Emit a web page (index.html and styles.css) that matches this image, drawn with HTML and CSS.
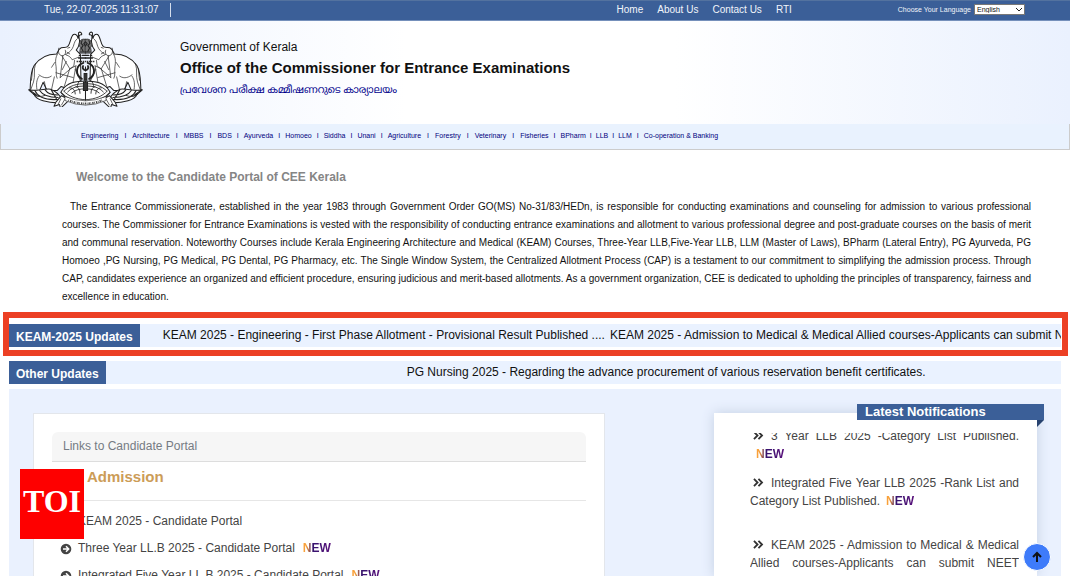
FILE: index.html
```html
<!DOCTYPE html>
<html lang="en">
<head>
<meta charset="utf-8">
<title>CEE Kerala</title>
<link rel="stylesheet" href="styles.css">
</head>
<body>
<div class="topbar">
  <time class="clock">Tue, 22-07-2025 11:31:07</time>
  <nav class="toplinks">
    <a href="#">Home</a><a href="#">About Us</a><a href="#">Contact Us</a><a href="#">RTI</a>
  </nav>
  <div class="language">
    <label for="lang">Choose Your Language</label>
    <span class="picker">
      <select id="lang"><option>English</option></select>
      <svg viewBox="0 0 8 6" width="8" height="6"><path d="M1 1l3 3 3-3" fill="none" stroke="#222"/></svg>
    </span>
  </div>
</div>

<header class="masthead">
  <svg class="emblem" viewBox="28 18 336 222" role="img" aria-label="Emblem of Kerala">
    <defs>
      <g id="half" fill="none" stroke="#222" stroke-width="3" stroke-linejoin="round" stroke-linecap="round">
        <path fill="#fff" d="M174 40c-1-9-6-14-13-12-9 6-8 24-16 34-5 7-12 3-20 5-8 3-10 12-13 18-26 0-50 10-66 34-12 20-10 42-12 73h28l10-24 12 24h29l12-12 22 8 36-18-2-84-12-12c8-10 12-22 8-38 0-5 2-8 8-7 1-6-5-10-9-6z"/>
        <path d="M170 42c-8 6-7 19-13 28-5 7-12 14-20 17M118 68c-3 10 0 22 10 22 8 0 12-8 9-16M144 68l6-2M142 80l8 5M140 88c8 2 14 8 17 14l20-8M115 84c-8 12-7 26-5 38 2 16-2 24 3 34M130 90l-8 64M122 154l40-34 2-16M105 152l-8 36M128 92l22 36 18-8M150 128l-16 52M168 120l-10 58M110 140l50 14M50 113c-7 20 0 36-6 54l-7 20M60 150c-8 12-8 24-6 38M96 150c-14 10-28 2-36-4M76 166l4 22M42 128l-4 34M106 110l-9 14M140 107l-12 24M166 130l16 35" stroke-width="2"/>
        <path fill="#fff" d="M30 190c22 4 44-4 64-2 12 4 24 14 34 30l-12 10c-30 0-64-8-70-24-4-6-10-8-16-14z"/>
        <path d="M48 192c10 22 40 28 68 26M62 192c10 16 32 20 54 20M78 190c8 12 20 15 36 15M44 202c10 8 24 8 34 4M32 190l20 14M96 190l16 28"/>
        <path fill="#fff" d="M126 207l-16 18-6 13 16-5 3 11 26-25z"/>
        <path d="M124 216l-8 17M136 217l-10 17" stroke-width="2"/>
        <path fill="#fff" d="M196 165c-32-2-60 8-72 32 14 16 38 28 72 30z"/>
        <path d="M133 194c16-16 38-23 63-22M144 196c12-13 28-18 52-17M156 199c10-9 22-12 40-12M133 194c14 15 34 23 63 25M168 180c8 2 12 9 12 20M150 184c10 0 16 8 16 18M124 198c14 20 38 32 72 35M180 163c-6 6-8 12-8 18" stroke-width="2.5"/>
        <path d="M190 111c-23 7-25 35-4 47M193 132c-5-3-6-8-4-12" stroke-width="5"/>
        <path d="M182 112c-17 13-16 34-2 45" stroke-width="2"/>
        <path fill="#777" d="M196 42c-10-2-16 2-17 9-3 5-2 11 2 15l-2 12h17z" stroke-width="2"/>
        <path d="M186 46l-3 8 6 6-5 8 5 9M196 50l-5 5 5 7"/>
        <path d="M179 82h17M178 89h4M187 89h9M176 97h20" stroke-width="4"/>
      </g>
    </defs>
    <use href="#half"/>
    <use href="#half" transform="translate(392 0) scale(-1 1)"/>
    <path d="M196 122v14M192 142h8v20h-8zM190 168h12v24h-12z" fill="#333" stroke="#222" stroke-width="3"/>
    <path d="M170 107h52" stroke="#333" stroke-width="4" stroke-dasharray="4 2"/>
    <path d="M136 209q60 26 120 0v12q-60 27-120 0z" fill="#fff" stroke="#333" stroke-width="2"/>
    <path d="M146 220q50 20 100 0" fill="none" stroke="#444" stroke-width="6" stroke-dasharray="2 3 4 2"/>
  </svg>
  <div class="titles">
    <p class="govt">Government of Kerala</p>
    <h1>Office of the Commissioner for Entrance Examinations</h1>
    <p class="malayalam" lang="ml">പ്രവേശന പരീക്ഷ കമ്മീഷണറുടെ കാര്യാലയം</p>
  </div>
</header>

<nav class="courses">
  <a href="#">Engineering</a><i class="wide">I</i><a href="#">Architecture</a><i class="wide">I</i><a href="#">MBBS</a><i class="wide">I</i><a href="#">BDS</a><i>I</i><a href="#">Ayurveda</a><i>I</i><a href="#">Homoeo</a><i>I</i><a href="#">Siddha</a><i>I</i><a href="#">Unani</a><i>I</i><a href="#">Agriculture</a><i class="wide">I</i><a href="#">Forestry</a><i class="wide">I</i><a href="#">Veterinary</a><i class="wide">I</i><a href="#">Fisheries</a><i>I</i><a href="#">BPharm</a><i class="tight">I</i><a href="#">LLB</a><i class="tight">I</i><a href="#">LLM</a><i>I</i><a href="#">Co-operation &amp; Banking</a>
</nav>

<section class="welcome">
  <h2>Welcome to the Candidate Portal of CEE Kerala</h2>
  <p>
    <span>The Entrance Commissionerate, established in the year 1983 through Government Order GO(MS) No-31/83/HEDn, is responsible for conducting examinations and counseling for admission to various professional</span>
    <span>courses. The Commissioner for Entrance Examinations is vested with the responsibility of conducting entrance examinations and allotment to various professional degree and post-graduate courses on the basis of merit</span>
    <span>and communal reservation. Noteworthy Courses include Kerala Engineering Architecture and Medical (KEAM) Courses, Three-Year LLB,Five-Year LLB, LLM (Master of Laws), BPharm (Lateral Entry), PG Ayurveda, PG</span>
    <span>Homoeo ,PG Nursing, PG Medical, PG Dental, PG Pharmacy, etc. The Single Window System, the Centralized Allotment Process (CAP) is a testament to our commitment to simplifying the admission process. Through</span>
    <span>CAP, candidates experience an organized and efficient procedure, ensuring judicious and merit-based allotments. As a government organization, CEE is dedicated to upholding the principles of transparency, fairness and</span>
    <span>excellence in education.</span>
  </p>
</section>

<section class="highlight">
  <div class="ticker">
    <h3>KEAM-2025 Updates</h3>
    <p class="keam"><span>KEAM 2025 - Engineering - First Phase Allotment - Provisional Result Published ....</span><span>KEAM 2025 - Admission to Medical &amp; Medical Allied courses-Applicants can submit N</span></p>
  </div>
</section>
<section class="ticker other">
  <h3>Other Updates</h3>
  <p>PG Nursing 2025 - Regarding the advance procurement of various reservation benefit certificates.</p>
</section>

<main class="panel">
  <section class="portal">
    <h2>Links to Candidate Portal</h2>
    <h3>Admission</h3>
    <ul>
      <li><svg class="arrow" viewBox="0 0 12 12"><circle cx="6" cy="6" r="5.3"/><path d="M3 6h5.5M6 3.3L8.7 6 6 8.7"/></svg><a href="#">KEAM 2025 - Candidate Portal</a></li>
      <li><svg class="arrow" viewBox="0 0 12 12"><circle cx="6" cy="6" r="5.3"/><path d="M3 6h5.5M6 3.3L8.7 6 6 8.7"/></svg><a href="#">Three Year LL.B 2025 - Candidate Portal</a><b class="new">NEW</b></li>
      <li><svg class="arrow" viewBox="0 0 12 12"><circle cx="6" cy="6" r="5.3"/><path d="M3 6h5.5M6 3.3L8.7 6 6 8.7"/></svg><a href="#">Integrated Five Year LL.B 2025 - Candidate Portal</a><b class="new">NEW</b></li>
    </ul>
    <div class="toi">TOI</div>
  </section>
  <section class="notices">
    <h2>Latest Notifications</h2>
    <div class="scroller">
      <ul>
        <li><svg class="chev" viewBox="0 0 12 10"><path d="M1.500 1l4 4-4 4M6.500 1l4 4-4 4"/></svg><a href="#">3 Year LLB 2025 -Category List Published.</a><wbr><b class="new">NEW</b></li>
        <li><svg class="chev" viewBox="0 0 12 10"><path d="M1.500 1l4 4-4 4M6.500 1l4 4-4 4"/></svg><a href="#">Integrated Five Year LLB 2025 -Rank List and Category List Published.</a><wbr><b class="new">NEW</b></li>
        <li class="later"><svg class="chev" viewBox="0 0 12 10"><path d="M1.500 1l4 4-4 4M6.500 1l4 4-4 4"/></svg><a href="#">KEAM 2025 - Admission to Medical &amp; Medical Allied courses-Applicants can submit NEET</a></li>
      </ul>
    </div>
  </section>
</main>
<button class="totop" aria-label="Back to top"><svg viewBox="0 0 12 12" width="12" height="12"><path d="M6 11V2M2 6l4-4 4 4" fill="none" stroke="#111" stroke-width="2"/></svg></button>
</body>
</html>
```
FILE: styles.css
```css
* { box-sizing: border-box; }
body {
  margin: 0;
  height: 100vh;
  overflow: hidden;
  display: flex;
  flex-direction: column;
  padding-bottom: 2px;
  background: #fff;
  color: #111;
  font-family: "Liberation Sans", Arial, sans-serif;
  font-size: 12px;
}
body > * { flex-shrink: 0; }
h1, h2, h3, p, ul { margin: 0; padding: 0; }
ul { list-style: none; }
a { color: inherit; text-decoration: none; }

.topbar {
  display: flex;
  align-items: center;
  height: 21px;
  padding: 0 45px 2px 44px;
  background: #3b5f98;
  border-top: 1px solid #53729f;
  border-bottom: 1px solid #7590bb;
  color: #f2f5fa;
  font-size: 10px;
}
.clock { padding-right: 11px; border-right: 1px solid #d5deec; line-height: 14px; }
.toplinks { display: flex; gap: 14px; margin-left: auto; }
.language { display: flex; align-items: center; gap: 3px; margin-left: 106px; font-size: 7px; }
.picker { position: relative; display: flex; }
.picker select {
  appearance: none;
  width: 51px;
  height: 11px;
  padding: 0 2px;
  border: 1px solid #777;
  border-radius: 0;
  background: #fff;
  color: #111;
  font: 7px "Liberation Sans", Arial, sans-serif;
}
.picker svg { position: absolute; right: 2px; top: 3px; }

.masthead {
  display: flex;
  gap: 37px;
  height: 103px;
  padding: 10px 28px;
  background: linear-gradient(90deg, #eaf1fe, #fff 38%, #fff 63%, #eaf1fe);
}
.emblem { width: 115px; height: 76px; }
.titles { padding-top: 7px; }
.govt { line-height: 18px; }
.titles h1 { font-size: 15px; line-height: 24px; }
.malayalam { color: #00008b; font: 10px/20px "Liberation Sans", "Noto Sans Malayalam", sans-serif; }

.courses {
  display: flex;
  align-items: center;
  height: 26px;
  padding: 0 80px 3px;
  background: #e9f2fe;
  border: 1px solid #ccc;
  border-top: 0;
  color: #00007d;
  font-size: 7px;
  white-space: nowrap;
}
.courses i { margin: 0 5px; font-style: normal; }
.courses .wide { margin: 0 6px; }
.courses .tight { margin: 0 4px; }

.welcome { padding: 18px 39px 6px 62px; }
.welcome h2 { padding-left: 14px; color: #858585; font-size: 12px; line-height: 18px; }
.welcome p { margin-top: 12px; font-size: 10px; line-height: 18px; }
.welcome span { display: block; text-align-last: justify; }
.welcome span:first-child { padding-left: 8px; }
.welcome span:last-child { text-align-last: left; }

.highlight { margin: 0 2px 0 3px; padding: 6px 1px 3px 0; border: 6px solid #ec4024; }
.ticker { display: flex; height: 23px; background: #eaf2ff; overflow: hidden; }
.ticker h3 { padding: 2px 7px 0; background: #3b5f98; color: #fff; font-size: 12px; line-height: 22px; white-space: nowrap; }
.ticker p { flex: 1; overflow: hidden; white-space: nowrap; font-size: 12px; line-height: 23px; }
.keam { display: flex; gap: 5px; padding-left: 23px; }
.other { margin: 5px 9px; }
.other p { padding-left: 301px; }

.panel {
  flex: 1 1 0;
  min-height: 0;
  margin: 0 9px;
  padding: 24px 24px 0;
  display: flex;
  justify-content: space-between;
  background: #eaf1fe;
  overflow: hidden;
}
.portal { position: relative; width: 57%; padding: 18px 18px 0; background: #fff; border: 1px solid #e3e6eb; border-bottom: 0; color: #444; }
.portal h2 {
  padding: 0 11px;
  background: #f6f6f6;
  border-bottom: 1px solid #ddd;
  border-radius: 6px 6px 0 0;
  color: #757b83;
  font-size: 12px;
  font-weight: normal;
  line-height: 29px;
}
.portal h3 { padding: 0 0 8px 35px; border-bottom: 1px solid #e6e6e6; color: #cc9c57; font-size: 15px; line-height: 30px; }
.portal ul { padding: 7px 8px 0; }
.portal li { display: flex; align-items: center; line-height: 27px; white-space: nowrap; }
.arrow { width: 12px; height: 12px; margin-right: 6px; }
.arrow circle { fill: #444; }
.arrow path { fill: none; stroke: #fff; stroke-width: 1.5; }
.portal .new { margin-left: 8px; }
.new {
  background: linear-gradient(90deg, #f9a13a 12%, #35136e 35%, #5a137c);
  background-clip: text;
  color: transparent;
  font-size: 12px;
}
.toi {
  position: absolute;
  left: -14px;
  top: 55px;
  width: 64px;
  height: 70px;
  background: #fe0000;
  color: #fff;
  font: bold 32px/64px "Liberation Serif", serif;
  text-align: center;
}

.notices {
  position: relative;
  width: 323px;
  padding: 20px 18px 0 36px;
  background: #fff;
  box-shadow: 0 0 12px #c3cfe3;
  color: #444;
}
.notices h2 {
  position: absolute;
  right: -7px;
  top: -9px;
  width: 187px;
  padding-left: 8px;
  background: #3b5f98;
  color: #fff;
  font-size: 13px;
  line-height: 16px;
}
.notices h2::after {
  content: "";
  position: absolute;
  right: 0;
  top: 100%;
  border-top: 7px solid #27426f;
  border-right: 7px solid transparent;
}
.scroller { height: 100%; overflow: hidden; }
.scroller ul { margin-top: -6px; }
.scroller li { margin-bottom: 11px; line-height: 18px; text-align: justify; }
.scroller .later { padding-top: 15px; text-align-last: justify; }
.scroller .new { margin-left: 6px; }
.chev { width: 12px; height: 9px; margin: 0 7px 0 2px; }
.chev path { fill: none; stroke: #333; stroke-width: 2; }

.totop {
  position: fixed;
  right: 19px;
  bottom: 7px;
  width: 28px;
  height: 28px;
  padding: 0;
  display: grid;
  place-items: center;
  border: 1px solid #fff;
  border-radius: 50%;
  background: #3e7bfa;
}
```
